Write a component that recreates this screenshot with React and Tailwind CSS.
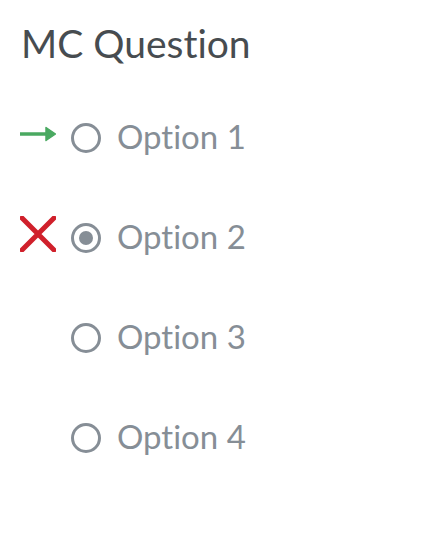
export default function App() {
  const options = ["Option 1", "Option 2", "Option 3", "Option 4"];
  return (
    <div className="w-[440px] h-[536px] bg-white [font-variant-ligatures:none]" style={{ fontFamily: "Lato, 'Noto Sans', sans-serif" }}>
      <div className="pl-[21px] pt-[21px] text-[39px] leading-[45px] text-[#474c50]">MC Question</div>
      <div className="flex flex-col pt-[22px]">
        {options.map((o, i) => (
          <div key={o} className="flex items-center h-[100px]">
            <div className="w-[36px] ml-[20px] h-[40px] mb-[8px] flex items-center justify-center">
              {i === 0 && (
                <svg width="36" height="20" viewBox="0 0 36 20">
                  <path d="M0 10 H28" stroke="#4aa961" strokeWidth="3.5" />
                  <path d="M26 3.5 L35.5 10 L26 16.5 Z" fill="#4aa961" stroke="#4aa961" strokeWidth="1.5" strokeLinejoin="round" />
                </svg>
              )}
              {i === 1 && (
                <svg width="36" height="36" viewBox="0 0 36 36">
                  <path d="M2 2 L34 34 M34 2 L2 34" stroke="#d0202b" strokeWidth="5" strokeLinecap="round" />
                </svg>
              )}
            </div>
            <div className="ml-[15px] w-[30px] h-[30px] rounded-full border-[3px] border-[#868e96] flex items-center justify-center">
              {i === 1 && <div className="w-[14px] h-[14px] rounded-full bg-[#868e96]" />}
            </div>
            <div className="ml-[16px] mb-[3px] text-[33px] text-[#868e96] leading-none">{o}</div>
          </div>
        ))}
      </div>
    </div>
  );
}
